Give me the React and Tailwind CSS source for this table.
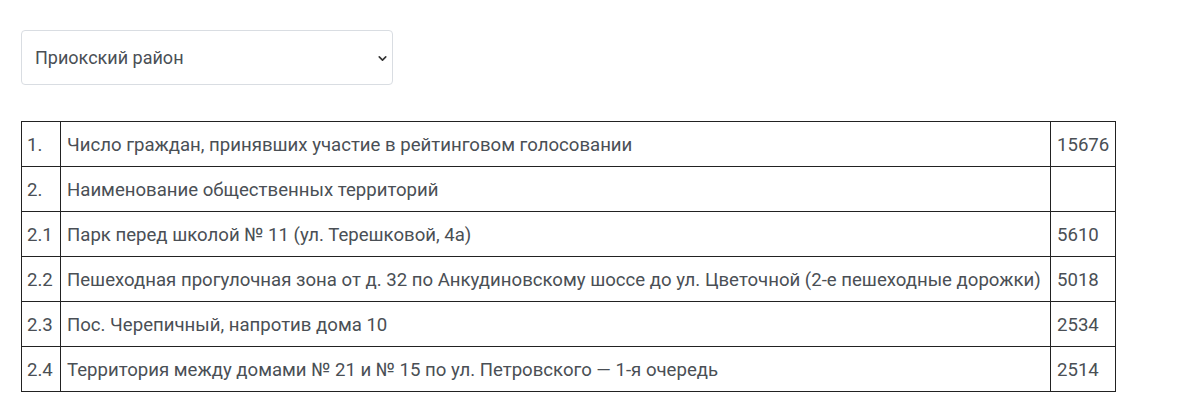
import { ChevronDown } from 'lucide-react';

const rows = [
  ['1.', 'Число граждан, принявших участие в рейтинговом голосовании', '15676'],
  ['2.', 'Наименование общественных территорий', ''],
  ['2.1', 'Парк перед школой № 11 (ул. Терешковой, 4а)', '5610'],
  ['2.2', 'Пешеходная прогулочная зона от д. 32 по Анкудиновскому шоссе до ул. Цветочной (2-е пешеходные дорожки)', '5018'],
  ['2.3', 'Пос. Черепичный, напротив дома 10', '2534'],
  ['2.4', 'Территория между домами № 21 и № 15 по ул. Петровского — 1-я очередь', '2514'],
];

const App = () => {
  return (
    <div className="min-h-screen bg-white pt-[30px] pl-[21px] font-['Roboto',sans-serif] text-[#4a4f55]">
      {/* District select */}
      <div className="relative w-[372px] h-[55px] border border-[#d9dde2] rounded-[4px] flex items-center px-[13px] text-[18px]">
        <span>Приокский район</span>
        <ChevronDown className="absolute right-[3px] top-[21px] w-[13px] h-[13px] text-[#333]" strokeWidth={3} />
      </div>

      {/* Results table */}
      <table className="mt-[36px] w-[1094px] table-fixed border-collapse text-[18.6px] leading-[24px]">
        <colgroup>
          <col className="w-[39px]" />
          <col className="w-[990px]" />
          <col className="w-[65px]" />
        </colgroup>
        <tbody>
          {rows.map((r) => (
            <tr key={r[0]} className="h-[45px]">
              <td className="border border-[#222] px-[5px] pt-[1px] whitespace-nowrap">{r[0]}</td>
              <td className="border border-[#222] px-[6px] pt-[1px] whitespace-nowrap">{r[1]}</td>
              <td className="border border-[#222] px-[6px] pt-[1px] whitespace-nowrap">{r[2]}</td>
            </tr>
          ))}
        </tbody>
      </table>
    </div>
  );
};

export default App;
